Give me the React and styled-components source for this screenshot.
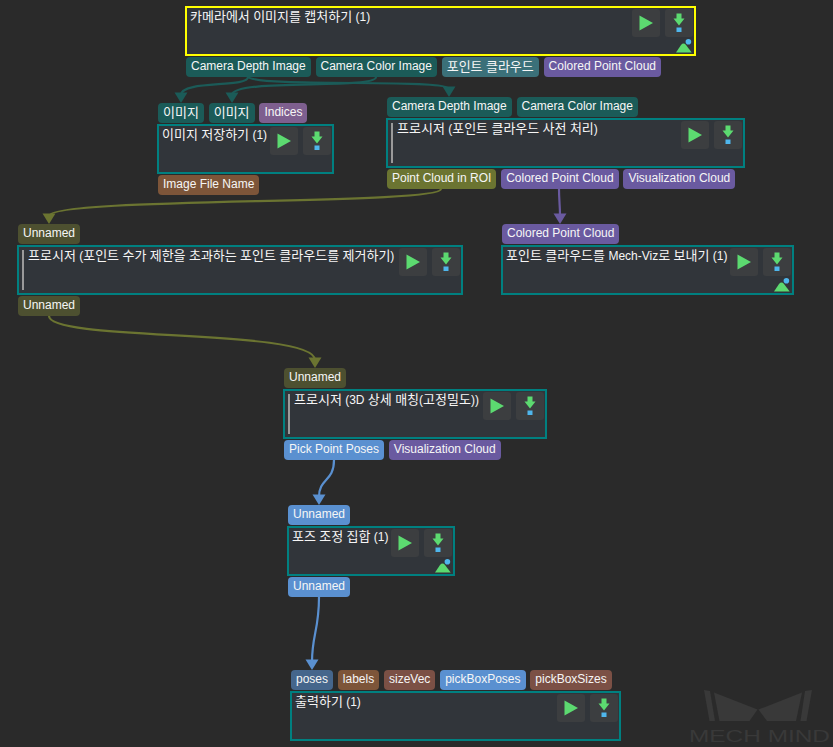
import React from "react";
import styled, { createGlobalStyle } from "styled-components";

const GlobalStyle = createGlobalStyle`
  html, body {
    margin: 0;
    height: 100%;
    background: #2a2a2a;
  }
`;

const TEAL = "#1b5b58";
const CLOUD = "#3b7079";
const PURPLE = "#6a5aa0";
const VIOLET = "#7e5f8f";
const BROWN = "#7d5539";
const OLIVE = "#6b7431";
const OLIVE_DIM = "#4d5030";
const BLUE = "#5a90d0";
const BLUE_DIM = "#45668c";
const RUST = "#7b5045";
const GREEN = "#5cda70";
const SKY = "#4fb6ec";

const nodes = [
  {
    x: 185, y: 6, w: 511, title: "카메라에서 이미지를 캡처하기 (1)", selected: true, mark: true,
    outputs: [
      ["Camera Depth Image", TEAL],
      ["Camera Color Image", TEAL],
      ["포인트 클라우드", CLOUD],
      ["Colored Point Cloud", PURPLE],
    ],
  },
  {
    x: 157, y: 103, w: 177, title: "이미지 저장하기 (1)",
    inputs: [["이미지", TEAL], ["이미지", TEAL], ["Indices", VIOLET]],
    outputs: [["Image File Name", BROWN]],
  },
  {
    x: 386, y: 97, w: 359, title: "프로시저 (포인트 클라우드 사전 처리)", bar: true,
    inputs: [["Camera Depth Image", TEAL], ["Camera Color Image", TEAL]],
    outputs: [
      ["Point Cloud in ROI", OLIVE],
      ["Colored Point Cloud", PURPLE],
      ["Visualization Cloud", PURPLE],
    ],
  },
  {
    x: 17, y: 224, w: 446, title: "프로시저 (포인트 수가 제한을 초과하는 포인트 클라우드를 제거하기)", bar: true,
    inputs: [["Unnamed", OLIVE_DIM]],
    outputs: [["Unnamed", OLIVE_DIM]],
  },
  {
    x: 501, y: 224, w: 293, title: "포인트 클라우드를 Mech-Viz로 보내기 (1)", mark: true,
    inputs: [["Colored Point Cloud", PURPLE]],
  },
  {
    x: 283, y: 368, w: 264, title: "프로시저 (3D 상세 매칭(고정밀도))", bar: true,
    inputs: [["Unnamed", OLIVE_DIM]],
    outputs: [["Pick Point Poses", BLUE], ["Visualization Cloud", PURPLE]],
  },
  {
    x: 287, y: 505, w: 168, title: "포즈 조정 집합 (1)", mark: true,
    inputs: [["Unnamed", BLUE]],
    outputs: [["Unnamed", BLUE]],
  },
  {
    x: 290, y: 670, w: 331, title: "출력하기 (1)",
    inputs: [
      ["poses", BLUE_DIM],
      ["labels", BROWN],
      ["sizeVec", RUST],
      ["pickBoxPoses", BLUE],
      ["pickBoxSizes", RUST],
    ],
  },
];

const edges = [
  { d: "M248 77 C248 88, 181 80, 181 95", color: TEAL, tip: [181, 103] },
  { d: "M248 77 C262 88, 449 78, 449 89", color: TEAL, tip: [449, 97] },
  { d: "M376 77 C376 90, 232 78, 232 95", color: TEAL, tip: [232, 103] },
  { d: "M441 189 C441 205, 49 197, 49 216", color: OLIVE, tip: [49, 224] },
  { d: "M49 316 C49 342, 315 328, 315 360", color: OLIVE, tip: [315, 368] },
  { d: "M559 189 C559 200, 560 205, 560 216", color: PURPLE, tip: [560, 224] },
  { d: "M334 460 C334 482, 319 478, 319 497", color: BLUE, tip: [319, 505] },
  { d: "M319 597 C319 630, 312 635, 312 662", color: BLUE, tip: [312, 670] },
];

const Canvas = styled.div`
  position: relative;
  width: 100%;
  height: 100vh;
  overflow: hidden;
  background: #2a2a2a;
  font-family: "Liberation Sans", "Noto Sans CJK KR", sans-serif;
  font-size: 12px;
  color: #f6f6f6;
`;

const EdgeLayer = styled.svg`
  position: absolute;
  left: 0;
  top: 0;
`;

const Watermark = styled.svg`
  position: absolute;
  right: 0;
  bottom: 0;
`;

const NodeBox = styled.div`
  position: absolute;
  left: ${(p) => p.$x}px;
  top: ${(p) => p.$y}px;
  width: ${(p) => p.$w}px;
  display: flex;
  flex-direction: column;
  gap: 1px;
`;

const PortRow = styled.div`
  display: flex;
  gap: 4.8px;
  padding-left: 1px;
`;

const Port = styled.div`
  height: 20px;
  padding: 0 5px;
  border-radius: 4px;
  line-height: 19px;
  white-space: nowrap;
  background: ${(p) => p.$color};
`;

const Body = styled.div`
  position: relative;
  box-sizing: border-box;
  height: 50px;
  display: flex;
  padding: 1px;
  background: #31353a;
  border: 2px solid ${(p) => (p.$selected ? "#ffff00" : "#008080")};
`;

const Bar = styled.div`
  flex: none;
  width: 2px;
  height: 40px;
  margin: 2px 2px 0 2px;
  background: #9a9a9a;
`;

const Title = styled.div`
  flex: 1;
  min-width: 0;
  padding: 1px 0 0 2px;
  line-height: 14px;
  white-space: nowrap;
`;

// Hangul in the app is set a touch larger than the latin text, 12px per syllable
const Hangul = styled.span`
  font-size: 13px;
`;

const Buttons = styled.div`
  flex: none;
  display: flex;
  gap: 5px;
`;

const ToolButton = styled.div`
  width: 28px;
  height: 28px;
  border-radius: 3px;
  background: #3c3e40;
`;

const ButtonIcon = styled.svg`
  display: block;
`;

const Mark = styled.svg`
  position: absolute;
  right: 2px;
  bottom: 1px;
`;

function Label({ text }) {
  const parts = text.split(/([\uac00-\ud7a3]+)/);
  return parts.map((part, i) =>
    i % 2 ? <Hangul key={i}>{part}</Hangul> : part
  );
}

function PlayButton() {
  return (
    <ToolButton>
      <ButtonIcon width="28" height="28" viewBox="0 0 28 28">
        <polygon points="7.5,6.5 21,14 7.5,21.5" fill={GREEN} />
      </ButtonIcon>
    </ToolButton>
  );
}

function StepButton() {
  return (
    <ToolButton>
      <ButtonIcon width="28" height="28" viewBox="0 0 28 28">
        <polygon points="11.5,4.5 16.5,4.5 16.5,9.5 19.5,9.5 14,16.5 8.5,9.5 11.5,9.5" fill={GREEN} />
        <rect x="11.5" y="18.5" width="5" height="4.5" fill={SKY} />
      </ButtonIcon>
    </ToolButton>
  );
}

function Node({ node }) {
  return (
    <NodeBox $x={node.x} $y={node.y} $w={node.w}>
      {node.inputs && (
        <PortRow>
          {node.inputs.map(([label, color], i) => (
            <Port key={i} $color={color}><Label text={label} /></Port>
          ))}
        </PortRow>
      )}
      <Body $selected={node.selected}>
        {node.bar && <Bar />}
        <Title><Label text={node.title} /></Title>
        <Buttons>
          <PlayButton />
          <StepButton />
        </Buttons>
        {node.mark && (
          <Mark width="16" height="14" viewBox="0 0 16 14">
            <path d="M0 13.5 L5 6 Q7.5 3.2 10 6 L15.7 13.5 Z" fill={GREEN} />
            <circle cx="12.4" cy="2.8" r="2.8" fill={SKY} />
          </Mark>
        )}
      </Body>
      {node.outputs && (
        <PortRow>
          {node.outputs.map(([label, color], i) => (
            <Port key={i} $color={color}><Label text={label} /></Port>
          ))}
        </PortRow>
      )}
    </NodeBox>
  );
}

export default function App() {
  return (
    <>
      <GlobalStyle />
      <Canvas>
        <Watermark width="143" height="67" viewBox="0 0 143 67">
          <g fill="#393939">
            <polygon points="14,10 20,11 25,41 19.5,41" />
            <polygon points="24,12.5 67.5,29.5 59.5,41 29.5,41" />
            <polygon points="112,12.5 68.5,29.5 77,41 106,41" />
            <polygon points="115,11 122,10 116.5,41 110.5,41" />
          </g>
          <text
            x="-1"
            y="62"
            fill="#393939"
            fontFamily="Liberation Sans, sans-serif"
            fontSize="16.5"
            textLength="141"
            lengthAdjust="spacingAndGlyphs"
          >
            MECH MIND
          </text>
        </Watermark>
        <EdgeLayer width="833" height="747" viewBox="0 0 833 747">
          {edges.map((edge, i) => (
            <g key={i}>
              <path d={edge.d} fill="none" stroke={edge.color} strokeWidth="2.2" />
              <polygon
                points={`${edge.tip[0] - 6.5},${edge.tip[1] - 10.5} ${edge.tip[0] + 6.5},${edge.tip[1] - 10.5} ${edge.tip[0]},${edge.tip[1]}`}
                fill={edge.color}
              />
            </g>
          ))}
        </EdgeLayer>
        {nodes.map((node, i) => (
          <Node key={i} node={node} />
        ))}
      </Canvas>
    </>
  );
}
